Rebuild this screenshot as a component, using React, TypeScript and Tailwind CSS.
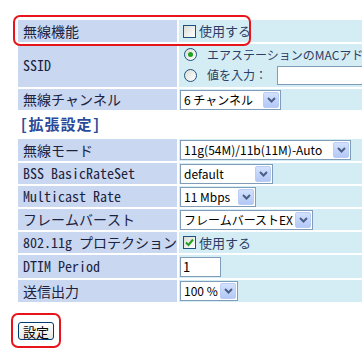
import React from 'react'

const labelFont = { fontFamily: '"Noto Sans Mono CJK JP", "Noto Sans CJK JP", monospace' }
const uiFont = { fontFamily: '"Noto Sans CJK JP", "Liberation Sans", sans-serif' }

const DropButton = () => (
    <div className="w-[16px] h-[16px] rounded-[2px] border border-[#b9cdf7] bg-linear-to-b from-[#d3e1fd] to-[#b3c8f6] flex items-center justify-center shrink-0">
        <svg width="9" height="6" viewBox="0 0 9 6" fill="none">
            <path d="M1 1 L4.5 4.5 L8 1" stroke="#4a5f86" strokeWidth="2" />
        </svg>
    </div>
)

const Select = ({ className, text }: { className: string; text: string }) => (
    <div className={`flex items-center justify-between gap-[2px] h-[20px] bg-white border border-[#7f9db9] pl-[3px] pr-[1px] text-[12px] text-black ${className}`} style={uiFont}>
        <span className="whitespace-nowrap">{text}</span>
        <DropButton />
    </div>
)

const CheckBox = ({ checked }: { checked?: boolean }) => (
    <div className="w-[13px] h-[13px] border border-[#1c5180] bg-linear-to-br from-[#dcdcd6] to-white flex items-center justify-center shrink-0">
        {checked && (
            <svg width="9" height="9" viewBox="0 0 9 9" fill="none">
                <path d="M1 4.5 L3.5 7 L8 1.5" stroke="#21a121" strokeWidth="2" />
            </svg>
        )}
    </div>
)

const Radio = ({ checked }: { checked?: boolean }) => (
    <div className="w-[13px] h-[13px] rounded-full border border-[#1c5180] bg-linear-to-br from-[#dcdcd6] to-white flex items-center justify-center shrink-0">
        {checked && <div className="w-[5px] h-[5px] rounded-full bg-[#21a121]" />}
    </div>
)

const Row = ({ label, h, children }: { label: string; h: string; children: React.ReactNode }) => (
    <div className={`flex gap-[2px] ${h}`}>
        <div className="w-[159px] shrink-0 bg-[#c9d7f1] flex items-center pl-[5px] text-[14px] text-[#1c2340] whitespace-nowrap" style={labelFont}>
            {label}
        </div>
        <div className="flex-1 bg-[#d4edf4] flex items-center pl-[1px]">
            {children}
        </div>
    </div>
)

const Use = ({ checked }: { checked?: boolean }) => (
    <div className="flex items-center gap-[3px] pl-[3px]">
        <CheckBox checked={checked} />
        <span className="text-[13px] text-[#2c3e66]" style={uiFont}>使用する</span>
    </div>
)

export default function App() {
    return (
        <div className="relative w-[362px] h-[360px] overflow-hidden bg-white">
            <div className="w-[420px] pl-[18px] pt-[20px]">
                <div className="flex flex-col gap-[2px]">
                    <Row label="無線機能" h="h-[22px]">
                        <Use />
                    </Row>
                    <Row label="SSID" h="h-[43px]">
                        <div className="flex flex-col gap-[3px] pl-[4px] text-[12px] text-[#2c3e66]" style={uiFont}>
                            <div className="flex items-center gap-[10px] h-[16px]">
                                <Radio checked />
                                <span className="whitespace-nowrap">エアステーションのMACアドレス</span>
                            </div>
                            <div className="flex items-center gap-[10px] h-[19px]">
                                <Radio />
                                <span className="whitespace-nowrap">値を入力：</span>
                                <div className="w-[120px] h-[19px] bg-white border border-[#7f9db9]" />
                            </div>
                        </div>
                    </Row>
                    <Row label="無線チャンネル" h="h-[21px]">
                        <Select className="w-[101px]" text="6 チャンネル" />
                    </Row>
                </div>

                <div className="h-[29px] flex items-center pl-[2px] text-[15px] font-bold text-[#2b4a9a] tracking-[1px]" style={labelFont}>
                    [拡張設定]
                </div>

                <div className="flex flex-col gap-[2px]">
                    <Row label="無線モード" h="h-[22px]">
                        <Select className="w-[171px]" text="11g(54M)/11b(11M)-Auto" />
                    </Row>
                    <Row label="BSS BasicRateSet" h="h-[21px]">
                        <Select className="w-[93px]" text="default" />
                    </Row>
                    <Row label="Multicast Rate" h="h-[21px]">
                        <Select className="w-[76px]" text="11 Mbps" />
                    </Row>
                    <Row label="フレームバースト" h="h-[21px]">
                        <Select className="w-[133px]" text="フレームバーストEX" />
                    </Row>
                    <Row label="802.11g プロテクション" h="h-[21px]">
                        <Use checked />
                    </Row>
                    <Row label="DTIM Period" h="h-[23px]">
                        <div className="w-[41px] h-[20px] bg-white border border-[#7f9db9] flex items-center pl-[2px] text-[13px] text-black" style={uiFont}>1</div>
                    </Row>
                    <Row label="送信出力" h="h-[22px]">
                        <Select className="w-[58px]" text="100 %" />
                    </Row>
                </div>

                <div className="pt-[20px]">
                    <button className="w-[36px] h-[18px] rounded-[3px] border border-[#003c74] bg-linear-to-b from-white to-[#e6e6e0] flex items-center justify-center text-[13px] text-black leading-none" style={uiFont}>
                        設定
                    </button>
                </div>
            </div>

            {/* annotation outlines */}
            <div className="absolute left-[13px] top-[15px] w-[238px] h-[31px] border-2 border-[#e8141c] rounded-[7px] pointer-events-none" />
            <div className="absolute left-[11px] top-[313px] w-[50px] h-[35px] border-2 border-[#e8141c] rounded-[7px] pointer-events-none" />
        </div>
    )
}
